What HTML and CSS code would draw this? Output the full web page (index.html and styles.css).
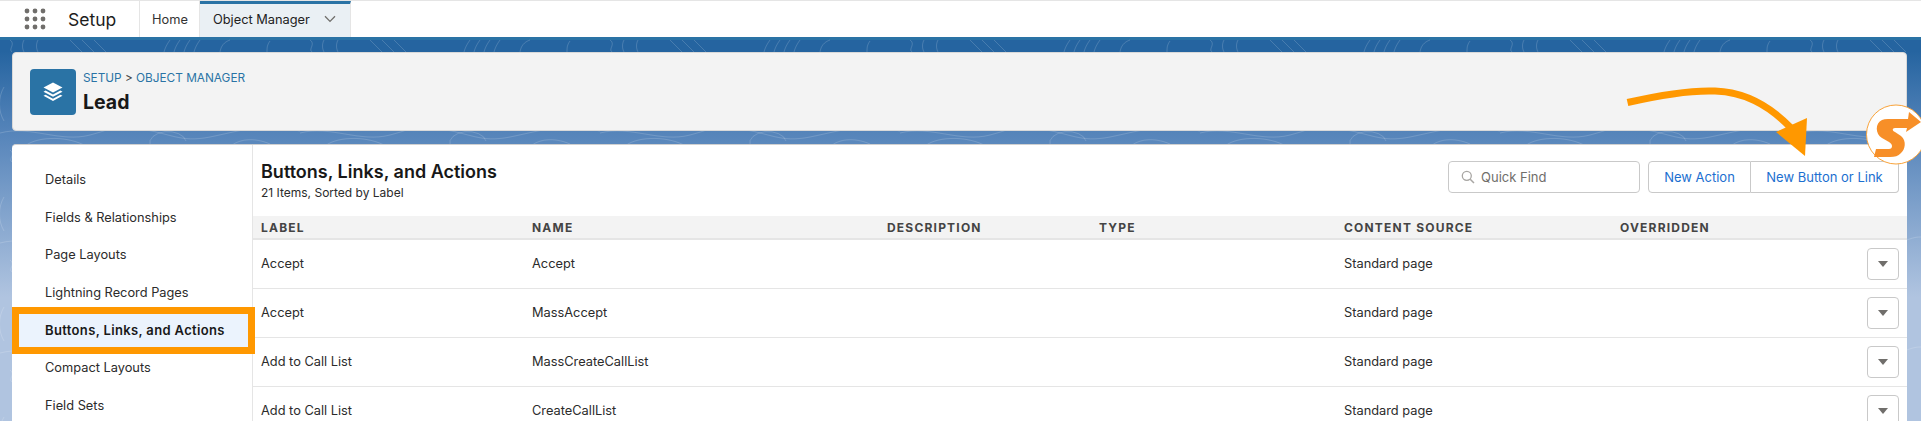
FILE: index.html
```html
<!DOCTYPE html>
<html lang="en">
<head>
<meta charset="utf-8">
<title>Lead - Buttons, Links, and Actions</title>
<link rel="stylesheet" href="styles.css">
</head>
<body>
<header class="topbar">
  <div class="launcher">
    <svg class="waffle" width="22" height="22" viewBox="0 0 22 22"><g fill="#706e6b"><circle cx="3" cy="3" r="2.4"/><circle cx="11" cy="3" r="2.4"/><circle cx="19" cy="3" r="2.4"/><circle cx="3" cy="11" r="2.4"/><circle cx="11" cy="11" r="2.4"/><circle cx="19" cy="11" r="2.4"/><circle cx="3" cy="19" r="2.4"/><circle cx="11" cy="19" r="2.4"/><circle cx="19" cy="19" r="2.4"/></g></svg>
    <span class="appname">Setup</span>
  </div>
  <nav class="tabs">
    <span class="tab">Home</span>
    <span class="tab tab-active">Object Manager
      <svg class="chev" width="12" height="8" viewBox="0 0 12 8"><path d="M1 1.2 6 6.4 11 1.2" fill="none" stroke="#706e6b" stroke-width="1.3"/></svg>
    </span>
  </nav>
</header>

<main class="stage">
  <svg class="topo" width="1921" height="384" viewBox="0 0 1921 384" aria-hidden="true">
    <defs>
      <pattern id="topo" width="300" height="110" patternUnits="userSpaceOnUse">
        <g fill="none" stroke="#ffffff" stroke-opacity=".16" stroke-width="1">
          <path d="M10 3c6 4-2 9 2 12M24 3c-2 4-2 8 0 12M38 3c-2 4-2 8 0 12M70 3c4 4 8 8 12 12M82 3c4 4 8 8 12 12M94 3c4 4 8 8 12 12M170 3c-3 4-5 8-6 12M180 3c-3 4-5 8-6 12M190 3c-3 4-5 8-6 12M200 3c-3 4-5 8-6 12M230 3c-6 2-9 6-10 12M270 4c-3 4-3 7-3 11"/>
          <path d="M0 96c30-8 60 10 90 2s20-10 50-6 40 14 70 8 50-14 90-6"/>
          <path d="M24 110c10-10 40-12 60-2M150 108a16 10 0 0 1 36-4M230 110c8-8 24-10 40-3"/>
          <path d="M4 50c-6 10-6 24 0 34M296 60c10 8 8 20 0 30"/>
        </g>
      </pattern>
    </defs>
    <rect width="1921" height="384" fill="url(#topo)"/>
  </svg>

  <section class="page-head">
    <div class="obj-icon">
      <svg width="20" height="19" viewBox="0 0 20 19"><g fill="#fff"><path d="M10 .5 19.500 5.600 10 10.600.5 5.600Z"/><path d="M2.600 8.600 10 12.600l7.400-4 2.100 1.100L10 14.800.5 9.700Z"/><path d="M2.600 12.700 10 16.700l7.400-4 2.100 1.100L10 18.900.5 13.800Z"/></g></svg>
    </div>
    <div class="head-text">
      <div class="crumbs"><span class="crumb">SETUP</span> &gt; <span class="crumb">OBJECT MANAGER</span></div>
      <h1 class="obj-title">Lead</h1>
    </div>
  </section>

  <section class="panel">
    <aside class="side">
      <a class="side-item">Details</a>
      <a class="side-item">Fields &amp; Relationships</a>
      <a class="side-item">Page Layouts</a>
      <a class="side-item">Lightning Record Pages</a>
      <a class="side-item side-active">Buttons, Links, and Actions</a>
      <a class="side-item">Compact Layouts</a>
      <a class="side-item">Field Sets</a>
    </aside>
    <div class="content">
      <div class="content-head">
        <div>
          <h2 class="content-title">Buttons, Links, and Actions</h2>
          <p class="content-sub">21 Items, Sorted by Label</p>
        </div>
        <div class="tools">
          <label class="search">
            <svg width="14" height="14" viewBox="0 0 14 14"><circle cx="5.800" cy="5.800" r="4.500" fill="none" stroke="#a8a6a3" stroke-width="1.300"/><path d="M9.200 9.200 13 13" stroke="#a8a6a3" stroke-width="1.500"/></svg>
            <span>Quick Find</span>
          </label>
          <div class="btn-group">
            <button class="btn btn-a">New Action</button>
            <button class="btn btn-b">New Button or Link</button>
          </div>
        </div>
      </div>
      <table class="grid">
        <colgroup><col class="c1"><col class="c2"><col class="c3"><col class="c4"><col class="c5"><col class="c6"><col class="c7"></colgroup>
        <thead>
          <tr><th>LABEL</th><th>NAME</th><th>DESCRIPTION</th><th>TYPE</th><th>CONTENT SOURCE</th><th>OVERRIDDEN</th><th></th></tr>
        </thead>
        <tbody>
          <tr><td>Accept</td><td>Accept</td><td></td><td></td><td>Standard page</td><td></td><td><span class="menu-btn"><i class="caret"></i></span></td></tr>
          <tr><td>Accept</td><td>MassAccept</td><td></td><td></td><td>Standard page</td><td></td><td><span class="menu-btn"><i class="caret"></i></span></td></tr>
          <tr><td>Add to Call List</td><td>MassCreateCallList</td><td></td><td></td><td>Standard page</td><td></td><td><span class="menu-btn"><i class="caret"></i></span></td></tr>
          <tr><td>Add to Call List</td><td>CreateCallList</td><td></td><td></td><td>Standard page</td><td></td><td><span class="menu-btn"><i class="caret"></i></span></td></tr>
        </tbody>
      </table>
    </div>
  </section>
</main>

<svg class="overlay" width="1921" height="421" viewBox="0 0 1921 421" aria-hidden="true">
  <path d="M1627.500 102.500C1660 95 1690 90 1715 91c28 1 52 12 76 37" fill="none" stroke="#ff9800" stroke-width="7"/>
  <path d="M1807 118 1776 132 1805 156Z" fill="#ff9800"/>
  <circle cx="1896" cy="134.500" r="29.500" fill="#fff" stroke="#f9a33a" stroke-width="1"/>
  <path d="M1874 157 1876 149H1889C1893 149 1893 144 1889 142L1882 138C1875 134 1875 123 1882 120Q1884 119 1888 119H1908L1909 112 1921 122 1906 132 1907 128H1895C1892 128 1892 131 1895 132L1901 136C1907 141 1905 150 1901 153 1898 156 1895 157 1890 157Z" fill="#f78f28"/>
</svg>
</body>
</html>
```
FILE: styles.css
```css
* { box-sizing: border-box; }
html, body { margin: 0; height: 421px; overflow: hidden; background: #fff; }
body { font-family: Inter, "Open Sans", "Liberation Sans", sans-serif; color: #181818; position: relative; font-size: 12.800px; }

.topbar { height: 37px; display: flex; background: #fff; border-top: 1px solid #e5e5e5; }
.launcher { width: 140px; display: flex; align-items: center; border-right: 1px solid #e5e5e5; padding-left: 24px; }
.waffle { flex: none; }
.appname { margin-left: 22px; font-size: 17.500px; color: #1d1d1d; }
.tabs { display: flex; }
.tab { display: flex; align-items: center; padding: 0 12px; font-size: 12.800px; color: #333; width: 60px; border-right: 1px solid #e5e5e5; }
.tab-active { width: 151px; background: #eaf0f4; border-top: 3px solid #2a73a5; gap: 14px; padding: 0 13px 3px; color: #222; }
.chev { flex: none; }

.stage { position: relative; height: 384px; padding: 15px 14px 0 12px; display: flex; flex-direction: column; gap: 13px; background: linear-gradient(#2a73a5 0, #2a73a5 3px, #2564a0 3px, #2564a0 14px, #5886bb 100px, #b0c4e0 260px, #b0c4e0 100%); }
.topo { position: absolute; left: 0; top: 0; }

.page-head { position: relative; height: 79px; flex: none; display: flex; align-items: center; padding-left: 17px; gap: 7px; background: #f3f3f3; border-radius: 4px; border: 1px solid #d9d9d9; }
.obj-icon { width: 46px; height: 46px; border-radius: 4px; background: #2a73a5; display: flex; align-items: center; justify-content: center; }
.crumbs { font-size: 11.800px; color: #444; line-height: 16px; }
.crumb { color: #2a73a5; }
.obj-title { margin: 4px 0 0; font-size: 19.500px; font-weight: 700; line-height: 24px; color: #181818; }

.panel { position: relative; flex: 1; display: flex; background: #fff; border-radius: 4px 4px 0 0; border-top: 1px solid #d0d0d0; min-height: 0; overflow: hidden; }
.side { width: 241px; flex: none; border-right: 1px solid #e5e5e5; padding-top: 16px; display: flex; flex-direction: column; }
.side-item { height: 37.600px; display: flex; align-items: center; padding-left: 33px; color: #2b2b2b; font-size: 12.800px; flex: none; }
.side-active { font-weight: 600; font-size: 13px; letter-spacing: .35px; color: #181818; background: #ebf3fd; outline: 7px solid #ff9800; outline-offset: -7px; height: 47px; margin: -4.700px -2px -4.700px 0; width: 243px; position: relative; }

.content { flex: 1; min-width: 0; }
.content-head { height: 71px; display: flex; justify-content: space-between; padding: 15px 8px 0 8px; }
.content-title { margin: 0; font-size: 18px; font-weight: 600; line-height: 24px; }
.content-sub { margin: 1px 0 0; font-size: 12px; line-height: 16px; color: #2b2b2b; }
.tools { display: flex; gap: 8px; padding-top: 1px; height: 33px; }
.search { width: 192px; height: 32px; border: 1px solid #c9c9c9; border-radius: 4px; display: flex; align-items: center; gap: 6px; padding-left: 12px; color: #706e6b; font-size: 13px; }
.btn-group { display: flex; height: 32px; }
.btn { background: #fff; border: 1px solid #c9c9c9; height: 32px; font: inherit; font-size: 13px; color: #1b6fd0; padding: 0; }
.btn-a { width: 103px; border-radius: 4px 0 0 4px; }
.btn-b { width: 148px; border-left: 0; border-radius: 0 4px 4px 0; }

.grid { width: 100%; table-layout: fixed; border-collapse: collapse; }
.c1 { width: 271px; } .c2 { width: 355px; } .c3 { width: 212px; } .c4 { width: 245px; } .c5 { width: 276px; } .c6 { width: 240px; }
.grid th { height: 23px; padding: 0 0 0 8px; text-align: left; font-size: 12px; font-weight: 700; letter-spacing: 1.200px; color: #444; background: #f3f3f3; border-bottom: 2px solid #e5e5e5; }
.grid td { height: 49px; padding: 0 0 0 8px; font-size: 12.800px; color: #2b2b2b; border-bottom: 1px solid #e5e5e5; }
.grid td:last-child { padding: 0 8px 0 0; text-align: right; }
.menu-btn { display: inline-flex; align-items: center; justify-content: center; width: 32px; height: 32px; border: 1px solid #c9c9c9; border-radius: 4px; vertical-align: middle; }
.caret { width: 0; height: 0; border: 5px solid transparent; border-top: 6px solid #706e6b; border-bottom: 0; }

.overlay { position: absolute; left: 0; top: 0; }
```
